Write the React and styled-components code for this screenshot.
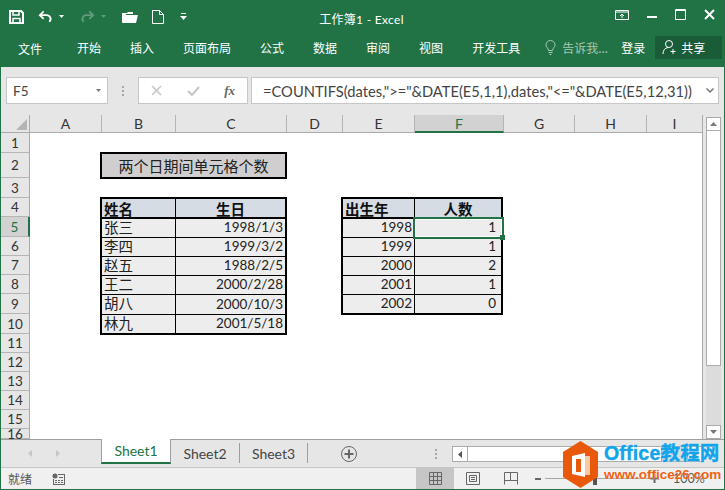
import React from 'react';
import styled, { createGlobalStyle } from 'styled-components';

const CJK = '"Noto Sans CJK SC", sans-serif';
const LATIN = 'Lato, "Noto Sans CJK SC", sans-serif';

const COLUMNS = [
  ['A', 72],
  ['B', 74],
  ['C', 111],
  ['D', 56],
  ['E', 72],
  ['F', 89],
  ['G', 71],
  ['H', 72],
  ['I', 56],
];
const ROW_HEIGHTS = [20, 25, 20, 19, 20, 19, 19, 19, 20, 20, 19, 19, 19, 19, 19, 10];
const PEOPLE = [
  ['张三', '1998/1/3'],
  ['李四', '1999/3/2'],
  ['赵五', '1988/2/5'],
  ['王二', '2000/2/28'],
  ['胡八', '2000/10/3'],
  ['林九', '2001/5/18'],
];
const COUNTS = [
  ['1998', '1'],
  ['1999', '1'],
  ['2000', '2'],
  ['2001', '1'],
  ['2002', '0'],
];
const TABS = ['开始', '插入', '页面布局', '公式', '数据', '审阅', '视图', '开发工具'];

const GlobalStyle = createGlobalStyle`
  html, body {
    margin: 0;
    padding: 0;
    background: #fff;
  }
`;

const Window = styled.div`
  position: relative;
  box-sizing: border-box;
  width: 725px;
  height: 490px;
  display: flex;
  flex-direction: column;
  border: 1px solid #217346;
  border-top: none;
  background: #e6e6e6;
  overflow: hidden;
  font-family: ${CJK};
`;

const TitleBar = styled.div`
  height: 33px;
  flex: none;
  margin: 0 -1px;
  display: grid;
  grid-template-columns: 1fr auto 1fr;
  align-items: center;
  background: #217346;
  color: #fff;
`;

const QuickAccess = styled.div`
  display: flex;
  align-items: center;
  padding-left: 9px;
`;

const QuickSlot = styled.span`
  display: flex;
  flex: none;
  margin-left: ${(p) => p.$left || 0}px;
`;

const Title = styled.div`
  font-size: 12px;
  font-family: ${LATIN};
  letter-spacing: 0.3px;
  position: relative;
  top: 2px;
  margin-right: 2px;
`;

const WindowButtons = styled.div`
  display: flex;
  align-items: center;
  justify-content: flex-end;
  gap: 18px;
  padding-right: 10px;
  position: relative;
  top: -2px;
`;

const TabRow = styled.div`
  height: 34px;
  flex: none;
  margin: 0 -1px;
  display: flex;
  align-items: center;
  background: #217346;
  color: #fff;
  font-size: 12px;
  padding-left: 18px;
  padding-bottom: 6px;
  box-sizing: border-box;
`;

const FileTab = styled.span`
  margin-right: 35px;
  position: relative;
  top: 1px;
`;

const Tab = styled.span`
  margin-right: 29px;
`;

const TellMe = styled.span`
  display: flex;
  align-items: center;
  gap: 6px;
  margin-left: -4px;
  color: #a6c8b5;
  width: 76px;
  flex: none;
`;

const ShareButton = styled.span`
  margin-left: 10px;
  width: 67px;
  height: 23px;
  display: flex;
  align-items: center;
  gap: 3px;
  padding-left: 7px;
  box-sizing: border-box;
  background: #1a5c38;
`;

const FormulaArea = styled.div`
  height: 48px;
  flex: none;
  display: flex;
  align-items: flex-start;
  padding: 10px 5px 0 5px;
  box-sizing: border-box;
  background: #e6e6e6;
`;

const Field = styled.div`
  height: 27px;
  box-sizing: border-box;
  display: flex;
  align-items: center;
  border: 1px solid #c6c6c6;
  background: #fff;
  color: #444;
  font-family: ${LATIN};
  font-size: 13.5px;
`;

const NameBox = styled(Field)`
  width: 102px;
  justify-content: space-between;
  padding: 0 6px;
`;

const Grip = styled.div`
  width: 30px;
  height: 27px;
  display: flex;
  flex-direction: column;
  align-items: center;
  justify-content: center;
  gap: 2px;
  i {
    width: 2px;
    height: 2px;
    background: #a6a6a6;
  }
`;

const FormulaButtons = styled(Field)`
  width: 110px;
  margin-right: 3px;
  padding: 0 12px 0 12px;
  justify-content: space-between;
`;

const FxLabel = styled.span`
  font-family: "Liberation Serif", serif;
  font-style: italic;
  font-weight: bold;
  font-size: 13px;
  color: #666;
`;

const FormulaInput = styled(Field)`
  flex: 1;
  padding: 0 4px 0 11px;
  justify-content: space-between;
  white-space: nowrap;
  font-size: 14.7px;
`;

const Main = styled.div`
  flex: 1;
  min-height: 0;
  display: flex;
`;

const Sheet = styled.div`
  width: 702px;
  flex: none;
  box-sizing: border-box;
  display: grid;
  grid-template-columns: 29px ${COLUMNS.map((c) => `${c[1]}px`).join(' ')};
  grid-template-rows: 18px ${ROW_HEIGHTS.map((h) => `${h}px`).join(' ')};
  background: #fff;
  overflow: hidden;
  border-right: 1px solid #ababab;
`;

const Corner = styled.div`
  background: #e6e6e6;
  border-right: 1px solid #ababab;
  border-bottom: 1px solid #ababab;
  box-sizing: border-box;
  display: flex;
  align-items: flex-end;
  justify-content: flex-end;
  padding: 0 2px 2px 0;
`;

const ColumnHeader = styled.div`
  box-sizing: border-box;
  display: flex;
  align-items: center;
  justify-content: center;
  font-family: ${LATIN};
  font-size: 14px;
  color: ${(p) => (p.$active ? '#217346' : '#333')};
  background: ${(p) => (p.$active ? '#d2d2d2' : '#e6e6e6')};
  border-right: 1px solid #b5b5b5;
  border-bottom: ${(p) => (p.$active ? '2px solid #217346' : '1px solid #ababab')};
`;

const RowHeader = styled.div`
  grid-column: 1;
  grid-row: ${(p) => p.$row};
  box-sizing: border-box;
  display: flex;
  align-items: center;
  justify-content: center;
  font-family: ${LATIN};
  font-size: 13.5px;
  color: ${(p) => (p.$active ? '#217346' : '#333')};
  background: ${(p) => (p.$active ? '#d2d2d2' : '#e6e6e6')};
  border-right: ${(p) => (p.$active ? '2px solid #217346' : '1px solid #ababab')};
  border-bottom: 1px solid #b5b5b5;
`;

const TitleCell = styled.div`
  grid-column: 3 / 5;
  grid-row: 3;
  margin: -1px 0 -1px -2px;
  box-sizing: border-box;
  display: flex;
  align-items: center;
  justify-content: center;
  border: 2px solid #000;
  background: #d0cece;
  color: #222;
  font-size: 15px;
`;

const DataTable = styled.div`
  grid-column: ${(p) => p.$columns};
  grid-row: 5;
  align-self: start;
  margin: -1px ${(p) => p.$right}px 0 -2px;
  box-sizing: border-box;
  display: grid;
  grid-template-columns: ${(p) => p.$tracks};
  grid-template-rows: ${(p) => p.$rowTracks};
  border: 2px solid #000;
  background: #000;
  gap: 1px;
`;

const HeadCell = styled.div`
  background: #d6dce4;
  border-bottom: 1px solid #000;
  display: flex;
  align-items: center;
  justify-content: ${(p) => (p.$center ? 'center' : 'flex-start')};
  padding: 0 2px;
  font-size: 14.5px;
  font-weight: 700;
  color: #111;
  overflow: hidden;
`;

const BodyCell = styled.div`
  position: relative;
  background: #ededed;
  display: flex;
  align-items: center;
  justify-content: flex-end;
  padding: 0 ${(p) => p.$pad || 2}px 0 2px;
  font-family: ${LATIN};
  font-size: 13.5px;
  color: #222;
  line-height: 1;
`;

const NameCell = styled(BodyCell)`
  justify-content: flex-start;
  font-size: 14.5px;
`;

const Selection = styled.div`
  position: absolute;
  inset: -2px -3px -2px -2px;
  z-index: 2;
  border: 2px solid #217346;
  box-shadow: inset 0 0 0 1px #fff;
  &::after {
    content: '';
    position: absolute;
    right: -3px;
    bottom: -3px;
    width: 5px;
    height: 5px;
    background: #217346;
  }
`;

const VerticalScroll = styled.div`
  flex: 1;
  display: flex;
  flex-direction: column;
  padding: 2px 3px 0 3px;
  background: #e6e6e6;
`;

const ScrollButton = styled.div`
  height: 14px;
  flex: none;
  box-sizing: border-box;
  display: flex;
  align-items: center;
  justify-content: center;
  border: 1px solid #ababab;
  background: #fff;
`;

const ScrollThumb = styled.div`
  height: 235px;
  flex: none;
  box-sizing: border-box;
  border: 1px solid #ababab;
  border-top: none;
  background: #fff;
`;

const ScrollTrack = styled.div`
  flex: 1;
  background: #dcdcdc;
`;

const SheetTabs = styled.div`
  height: 28px;
  flex: none;
  display: flex;
  box-sizing: border-box;
  border-top: 1px solid #9e9e9e;
  background: #e6e6e6;
  font-family: ${LATIN};
  font-size: 14px;
  color: #444;
`;

const TabNav = styled.div`
  width: 100px;
  flex: none;
  display: flex;
  align-items: center;
  gap: 24px;
  padding-left: 27px;
  box-sizing: border-box;
`;

const SheetTab = styled.div`
  box-sizing: border-box;
  flex: none;
  width: ${(p) => p.$width}px;
  display: flex;
  align-items: center;
  justify-content: center;
  height: ${(p) => (p.$active ? '25px' : '20px')};
  margin-top: ${(p) => (p.$active ? '-1px' : '3px')};
  color: ${(p) => (p.$active ? '#217346' : '#444')};
  background: ${(p) => (p.$active ? '#fff' : 'transparent')};
  border-left: ${(p) => (p.$active ? '1px solid #9e9e9e' : 'none')};
  border-right: 1px solid #9e9e9e;
  border-bottom: ${(p) => (p.$active ? '2px solid #217346' : 'none')};
`;

const AddSheet = styled.div`
  width: 120px;
  flex: none;
  display: flex;
  align-items: center;
  padding-left: 33px;
  box-sizing: border-box;
`;

const TabsGrip = styled(Grip)`
  width: 15px;
  height: auto;
`;

const HorizontalScroll = styled.div`
  margin: 6px 0 0 9px;
  width: 251px;
  height: 16px;
  display: flex;
  box-sizing: border-box;
  border: 1px solid #ababab;
  background: #dcdcdc;
`;

const HScrollArrow = styled.div`
  width: 14px;
  flex: none;
  display: flex;
  align-items: center;
  justify-content: center;
  background: #fff;
  border-right: 1px solid #ababab;
`;

const HScrollThumb = styled.div`
  width: 193px;
  flex: none;
  background: #fff;
  border-right: 1px solid #ababab;
  margin-right: auto;
`;

const HScrollEnd = styled(HScrollArrow)`
  border-right: none;
  border-left: 1px solid #ababab;
`;

const StatusBar = styled.div`
  height: 22px;
  flex: none;
  display: flex;
  align-items: center;
  box-sizing: border-box;
  border-top: 1px solid #c6c6c6;
  background: #f0f0f0;
  font-size: 12px;
  color: #555;
  padding-left: 7px;
`;

const StatusIcon = styled.span`
  margin-left: 20px;
  display: flex;
`;

const ViewButtons = styled.div`
  margin-left: auto;
  height: 100%;
  display: flex;
  align-items: center;
  padding-right: 21px;
`;

const ViewButton = styled.div`
  width: 38px;
  height: 100%;
  display: flex;
  align-items: center;
  justify-content: center;
  background: ${(p) => (p.$active ? '#c6c6c6' : 'transparent')};
`;

const ZoomGlyph = styled.span`
  width: 12px;
  flex: none;
  display: flex;
  justify-content: center;
`;

const ZoomMinus = styled(ZoomGlyph)`
  margin-left: 2px;
`;

const ZoomSlider = styled.div`
  position: relative;
  width: 103px;
  height: 1px;
  margin-left: 1px;
  background: #a6a6a6;
  &::after {
    content: '';
    position: absolute;
    left: 48px;
    top: -7px;
    width: 4px;
    height: 14px;
    background: #555;
  }
`;

const ZoomValue = styled.span`
  width: 30px;
  flex: none;
  margin-left: 13px;
  font-family: ${LATIN};
  font-size: 12.5px;
  color: #555;
  white-space: nowrap;
`;

const Watermark = styled.div`
  position: absolute;
  left: 561px;
  top: 441px;
  display: flex;
  gap: 5px;
  z-index: 5;
`;

const WatermarkText = styled.div`
  display: flex;
  flex-direction: column;
  font-weight: 700;
  white-space: nowrap;
`;

const WatermarkName = styled.span`
  font-family: "Liberation Sans", "Noto Sans CJK SC", sans-serif;
  font-size: 19.5px;
  line-height: 24px;
  letter-spacing: 0.2px;
  color: #12a3ea;
  -webkit-text-stroke: 0.4px #12a3ea;
  text-shadow: 0 0 2px rgba(255, 255, 255, 0.7);
`;

const WatermarkUrl = styled.span`
  font-family: "Liberation Sans", sans-serif;
  font-size: 13.5px;
  line-height: 18px;
  margin-top: 1px;
  color: #ef6214;
  text-shadow: 0 0 2px rgba(255, 255, 255, 0.7);
`;

const SaveIcon = () => (
  <svg width="15" height="14" viewBox="0 0 15 14" fill="none" stroke="#fff" strokeWidth="2">
    <path d="M1 1h11l2 2v10H1z" />
    <path d="M4 1v4h6V1M4 13V8.500h7V13" strokeWidth="1.500" />
  </svg>
);

const ArrowIcon = ({ flip, color = '#fff' }) => (
  <svg width="15" height="14" viewBox="0 0 16 14" fill="none" stroke={color} strokeWidth="2">
    <path d={flip ? 'M10 1l4 4-4 4M14 5H7a4 4 0 0 0-3 7' : 'M6 1 2 5l4 4M2 5h7a4 4 0 0 1 3 7'} />
  </svg>
);

const CaretIcon = ({ color = '#fff' }) => (
  <svg width="5" height="3" viewBox="0 0 5 3">
    <path d="M0 0h5L2.500 3z" fill={color} />
  </svg>
);

const OpenIcon = () => (
  <svg width="17" height="14" viewBox="0 0 17 14">
    <path d="M1 13V3h5l1-1h5v2H5L3 9" fill="#fff" />
    <path d="M1 13 4 5h13l-2 8z" fill="#fff" />
  </svg>
);

const NewIcon = () => (
  <svg width="12" height="14" viewBox="0 0 12 14" fill="none" stroke="#fff" strokeWidth="1">
    <path d="M.5.500h7l4 4v9H.500zM7.500.500v4h4" />
  </svg>
);

const CustomizeIcon = () => (
  <svg width="7" height="7" viewBox="0 0 7 7">
    <path d="M1 0h5v1H1zM0 3h7L3.500 7z" fill="#fff" />
  </svg>
);

const RibbonDisplayIcon = () => (
  <svg width="14" height="12" viewBox="0 0 14 12" fill="none" stroke="#fff">
    <path d="M.500 1.500h13v9H.500zM.500 3h13" />
    <path d="M7 9V5M5 7l2-2 2 2" />
  </svg>
);

const MinimizeIcon = () => (
  <svg width="10" height="12" viewBox="0 0 10 12">
    <path d="M0 7h10v2H0z" fill="#fff" />
  </svg>
);

const MaximizeIcon = () => (
  <svg width="11" height="11" viewBox="0 0 11 11" fill="none" stroke="#fff">
    <path d="M.500.500h10v10H.500z" />
    <path d="M0 1.500h11" />
  </svg>
);

const CloseIcon = () => (
  <svg width="11" height="11" viewBox="0 0 11 11" stroke="#fff" strokeWidth="2">
    <path d="m1 1 9 9M10 1l-9 9" />
  </svg>
);

const BulbIcon = () => (
  <svg width="11" height="15" viewBox="0 0 11 15" fill="none" stroke="#a6c8b5">
    <path d="M3.500 10.500C3.500 8 1 7.500 1 5a4.500 4.500 0 0 1 9 0c0 2.500-2.500 3-2.500 5.500zM3.500 12.500h4M4.500 14.500h2" />
  </svg>
);

const ShareIcon = () => (
  <svg width="16" height="16" viewBox="0 0 16 16" fill="none" stroke="#fff">
    <circle cx="7" cy="5" r="3.500" />
    <path d="M1 15c0-4 2-6 5-6.500M11 10v5M8.500 12.500h5" />
  </svg>
);

const CancelIcon = () => (
  <svg width="11" height="11" viewBox="0 0 11 11" stroke="#c6c6c6" strokeWidth="1.500">
    <path d="m1 1 9 9M10 1l-9 9" />
  </svg>
);

const CheckIcon = () => (
  <svg width="13" height="11" viewBox="0 0 13 11" fill="none" stroke="#c6c6c6" strokeWidth="2">
    <path d="m1 6 4 4 7-8" />
  </svg>
);

const Chevron = () => (
  <svg width="8" height="5" viewBox="0 0 8 5" fill="none" stroke="#777" strokeWidth="1.500">
    <path d="m.500.500 3.500 3.500 3.500-3.500" />
  </svg>
);

const TriangleLeft = ({ color = '#555' }) => (
  <svg width="4" height="7" viewBox="0 0 4 7">
    <path d="M4 0v7L0 3.500z" fill={color} />
  </svg>
);

const TriangleRight = ({ color = '#c6c6c6' }) => (
  <svg width="4" height="7" viewBox="0 0 4 7">
    <path d="M0 0v7l4-3.500z" fill={color} />
  </svg>
);

const TriangleUp = () => (
  <svg width="7" height="4" viewBox="0 0 7 4">
    <path d="M0 4h7L3.500 0z" fill="#777" />
  </svg>
);

const TriangleDown = () => (
  <svg width="7" height="4" viewBox="0 0 7 4">
    <path d="M0 0h7L3.500 4z" fill="#777" />
  </svg>
);

const CornerMark = () => (
  <svg width="11" height="11" viewBox="0 0 11 11">
    <path d="M11 0v11H0z" fill="#b5b5b5" />
  </svg>
);

const AddIcon = () => (
  <svg width="16" height="16" viewBox="0 0 16 16" fill="none" stroke="#666">
    <circle cx="8" cy="8" r="7.500" />
    <path d="M8 3.500v9M3.500 8h9" strokeWidth="2" />
  </svg>
);

const MacroIcon = () => (
  <svg width="13" height="12" viewBox="0 0 13 12">
    <circle cx="3" cy="3" r="2.500" fill="#666" />
    <path d="M6 1h7v11H1V6h1v5h10V2H6zM3 7h2v1H3zM6 7h2v1H6zM9 7h2v1H9zM3 9h2v1H3zM6 9h2v1H6zM9 9h2v1H9zM7 4h4v1H7z" fill="#666" />
  </svg>
);

const NormalViewIcon = () => (
  <svg width="13" height="13" viewBox="0 0 13 13" fill="none" stroke="#666">
    <path d="M.500.500h12v12H.500zM4.500.500v12M8.500.500v12M.500 4.500h12M.500 8.500h12" />
  </svg>
);

const PageViewIcon = () => (
  <svg width="14" height="13" viewBox="0 0 14 13" fill="none" stroke="#666">
    <path d="M.500.500h13v12H.500zM3.500 3.500h7v6h-7zM5 5.500h4M5 7.500h4" />
  </svg>
);

const BreakViewIcon = () => (
  <svg width="14" height="13" viewBox="0 0 14 13" fill="none" stroke="#666">
    <path d="M.500 12.500V.500h13v12M.500 8.500h6V.500M6.500 8.500h7" />
  </svg>
);

const MinusIcon = () => (
  <svg width="6" height="2" viewBox="0 0 6 2">
    <path d="M0 0h6v2H0z" fill="#666" />
  </svg>
);

const PlusIcon = () => (
  <svg width="9" height="9" viewBox="0 0 9 9">
    <path d="M3.500 0h2v3.500H9v2H5.500V9h-2V5.500H0v-2h3.500z" fill="#666" />
  </svg>
);

const OfficeLogo = () => (
  <svg width="37" height="47" viewBox="0 0 37 47">
    <path d="M18.500 0 36 11v25L18.500 47 1 36V11z" fill="#e8590c" />
    <path d="M10 15 23 12v24l-13-3z" fill="#fff" />
    <path d="M23 15h5v19h-5z" fill="#f9c9a6" />
    <path d="M14 18h5v13h-5z" fill="#e8590c" />
  </svg>
);

export default function App() {
  return (
    <Window>
      <GlobalStyle />
      <TitleBar>
        <QuickAccess>
          <QuickSlot>
            <SaveIcon />
          </QuickSlot>
          <QuickSlot $left={14}>
            <ArrowIcon />
          </QuickSlot>
          <QuickSlot $left={6}>
            <CaretIcon />
          </QuickSlot>
          <QuickSlot $left={16}>
            <ArrowIcon flip color="#5f9c7c" />
          </QuickSlot>
          <QuickSlot $left={6}>
            <CaretIcon color="#5f9c7c" />
          </QuickSlot>
          <QuickSlot $left={15}>
            <OpenIcon />
          </QuickSlot>
          <QuickSlot $left={14}>
            <NewIcon />
          </QuickSlot>
          <QuickSlot $left={16}>
            <CustomizeIcon />
          </QuickSlot>
        </QuickAccess>
        <Title>工作簿1 - Excel</Title>
        <WindowButtons>
          <RibbonDisplayIcon />
          <MinimizeIcon />
          <MaximizeIcon />
          <CloseIcon />
        </WindowButtons>
      </TitleBar>

      <TabRow>
        <FileTab>文件</FileTab>
        {TABS.map((tab) => (
          <Tab key={tab}>{tab}</Tab>
        ))}
        <TellMe>
          <BulbIcon />
          告诉我...
        </TellMe>
        <span>登录</span>
        <ShareButton>
          <ShareIcon />
          共享
        </ShareButton>
      </TabRow>

      <FormulaArea>
        <NameBox>
          F5
          <CaretIcon color="#777" />
        </NameBox>
        <Grip>
          <i />
          <i />
          <i />
        </Grip>
        <FormulaButtons>
          <CancelIcon />
          <CheckIcon />
          <FxLabel>fx</FxLabel>
        </FormulaButtons>
        <FormulaInput>
          {'=COUNTIFS(dates,">="&DATE(E5,1,1),dates,"<="&DATE(E5,12,31))'}
          <Chevron />
        </FormulaInput>
      </FormulaArea>

      <Main>
        <Sheet>
          <Corner>
            <CornerMark />
          </Corner>
          {COLUMNS.map(([name]) => (
            <ColumnHeader key={name} $active={name === 'F'}>
              {name}
            </ColumnHeader>
          ))}
          {ROW_HEIGHTS.map((_, i) => (
            <RowHeader key={i} $row={i + 2} $active={i === 4}>
              {i + 1}
            </RowHeader>
          ))}

          <TitleCell>两个日期间单元格个数</TitleCell>

          <DataTable
            $columns="3 / 5"
            $right={0}
            $tracks="73px 1fr"
            $rowTracks="19px 18px 18px 18px 18px 19px 18px"
          >
            <HeadCell>姓名</HeadCell>
            <HeadCell $center>生日</HeadCell>
            {PEOPLE.map(([name, birthday]) => (
              <React.Fragment key={name}>
                <NameCell>{name}</NameCell>
                <BodyCell>{birthday}</BodyCell>
              </React.Fragment>
            ))}
          </DataTable>

          <DataTable
            $columns="6 / 8"
            $right={1}
            $tracks="71px 1fr"
            $rowTracks="19px 18px 18px 18px 18px 18px"
          >
            <HeadCell>出生年</HeadCell>
            <HeadCell $center>人数</HeadCell>
            {COUNTS.map(([year, count], i) => (
              <React.Fragment key={year}>
                <BodyCell>{year}</BodyCell>
                <BodyCell $pad={5}>
                  {count}
                  {i === 0 && <Selection />}
                </BodyCell>
              </React.Fragment>
            ))}
          </DataTable>
        </Sheet>
        <VerticalScroll>
          <ScrollButton>
            <TriangleUp />
          </ScrollButton>
          <ScrollThumb />
          <ScrollTrack />
          <ScrollButton>
            <TriangleDown />
          </ScrollButton>
        </VerticalScroll>
      </Main>

      <SheetTabs>
        <TabNav>
          <TriangleLeft color="#c6c6c6" />
          <TriangleRight />
        </TabNav>
        <SheetTab $active $width={70}>
          Sheet1
        </SheetTab>
        <SheetTab $width={69}>Sheet2</SheetTab>
        <SheetTab $width={68}>Sheet3</SheetTab>
        <AddSheet>
          <AddIcon />
        </AddSheet>
        <TabsGrip>
          <i />
          <i />
          <i />
        </TabsGrip>
        <HorizontalScroll>
          <HScrollArrow>
            <TriangleLeft />
          </HScrollArrow>
          <HScrollThumb />
          <HScrollEnd>
            <TriangleRight color="#555" />
          </HScrollEnd>
        </HorizontalScroll>
      </SheetTabs>

      <StatusBar>
        就绪
        <StatusIcon>
          <MacroIcon />
        </StatusIcon>
        <ViewButtons>
          <ViewButton $active>
            <NormalViewIcon />
          </ViewButton>
          <ViewButton>
            <PageViewIcon />
          </ViewButton>
          <ViewButton>
            <BreakViewIcon />
          </ViewButton>
          <ZoomMinus>
            <MinusIcon />
          </ZoomMinus>
          <ZoomSlider />
          <ZoomGlyph>
            <PlusIcon />
          </ZoomGlyph>
          <ZoomValue>100%</ZoomValue>
        </ViewButtons>
      </StatusBar>

      <Watermark>
        <OfficeLogo />
        <WatermarkText>
          <WatermarkName>Office教程网</WatermarkName>
          <WatermarkUrl>www.office26.com</WatermarkUrl>
        </WatermarkText>
      </Watermark>
    </Window>
  );
}
